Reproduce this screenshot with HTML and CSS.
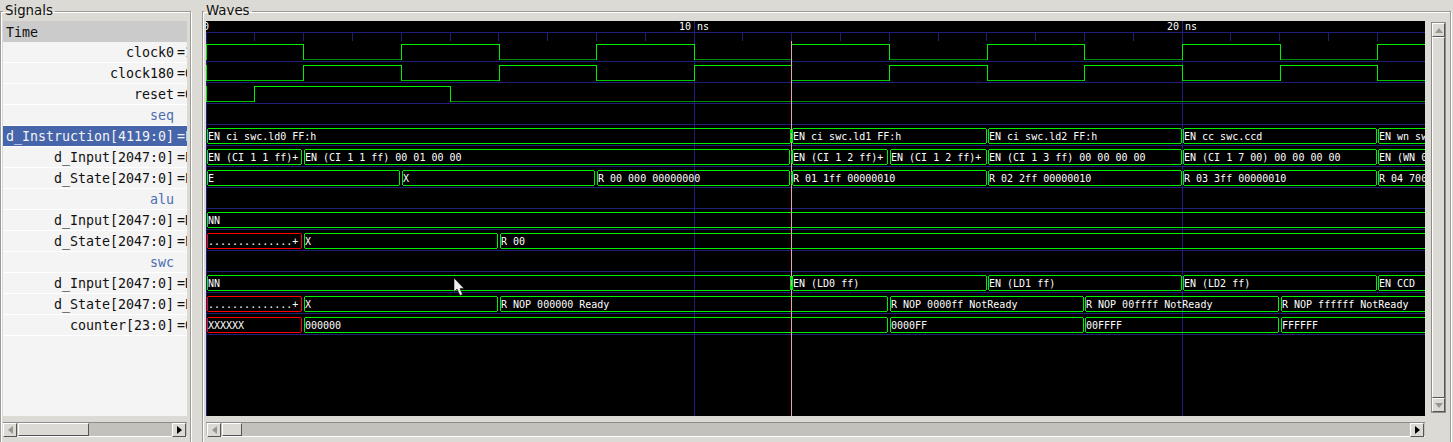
FILE: index.html
```html
<!DOCTYPE html>
<html lang="en">
<head>
    <meta charset="UTF-8">
    <title>GTKWave</title>
    <link rel="stylesheet" href="styles.css">
</head>
<body>

<fieldset class="frame signals">
    <legend>Signals</legend>
    <div class="list">
        <div class="time-row">Time</div>
        <div class="row"><span class="name">clock0</span><span class="eq">=</span><span class="val">1</span></div>
        <div class="row"><span class="name">clock180</span><span class="eq">=</span><span class="val">0</span></div>
        <div class="row"><span class="name">reset</span><span class="eq">=</span><span class="val">0</span></div>
        <div class="row group"><span class="name">seq</span></div>
        <div class="row selected"><span class="name">d_Instruction[4119:0]</span><span class="eq">=</span><span class="val">E</span></div>
        <div class="row"><span class="name">d_Input[2047:0]</span><span class="eq">=</span><span class="val">E</span></div>
        <div class="row"><span class="name">d_State[2047:0]</span><span class="eq">=</span><span class="val">E</span></div>
        <div class="row group"><span class="name">alu</span></div>
        <div class="row"><span class="name">d_Input[2047:0]</span><span class="eq">=</span><span class="val">N</span></div>
        <div class="row"><span class="name">d_State[2047:0]</span><span class="eq">=</span><span class="val">E</span></div>
        <div class="row group"><span class="name">swc</span></div>
        <div class="row"><span class="name">d_Input[2047:0]</span><span class="eq">=</span><span class="val">N</span></div>
        <div class="row"><span class="name">d_State[2047:0]</span><span class="eq">=</span><span class="val">E</span></div>
        <div class="row"><span class="name">counter[23:0]</span><span class="eq">=</span><span class="val">0</span></div>
    </div>
    <div class="hscroll">
        <div class="sb-btn"><i class="arrow left off"></i></div>
        <div class="sb-thumb sig-thumb"></div>
        <div class="sb-track"></div>
        <div class="sb-btn"><i class="arrow right"></i></div>
    </div>
</fieldset>

<fieldset class="frame waves">
    <legend>Waves</legend>
    <div class="waves-grid">
        <svg class="wave-view" viewBox="206 21 1219 395" width="1219" height="395">
            <!-- row lines and time ticks -->
            <path class="grid" d="M206 32.5H1425M206 61.5H1425M206 82.5H1425M206 103.5H1425M206 124.5H1425M206 145.5H1425M206 166.5H1425M206 187.5H1425M206 208.5H1425M206 229.5H1425M206 250.5H1425M206 271.5H1425M206 292.5H1425M206 313.5H1425M206 334.5H1425"/>
            <path class="grid" d="M254.5 32V41M303.5 32V41M352.5 32V41M401.5 32V41M450.5 32V41M498.5 32V41M547.5 32V41M596.5 32V41M645.5 32V41M742.5 32V41M791.5 32V41M840.5 32V41M889.5 32V41M938.5 32V41M986.5 32V41M1035.5 32V41M1084.5 32V41M1133.5 32V41M1230.5 32V41M1279.5 32V41M1328.5 32V41M1377.5 32V41"/>
            <path class="grid" d="M206.5 32V416M694.5 21V416M1182.5 21V416"/>
            <text class="label" x="203" y="30">0</text>
            <text class="label" x="679" y="30">10</text>
            <text class="label" x="697" y="30">ns</text>
            <text class="label" x="1167" y="30">20</text>
            <text class="label" x="1185" y="30">ns</text>

            <!-- clock0 -->
            <path class="low" d="M303 59.5H401M499 59.5H596M694 59.5H791M889 59.5H987M1084 59.5H1182M1280 59.5H1377"/>
            <path class="high" d="M206.5 60V44.5H303.5V60M401.5 60V44.5H499.5V60M596.5 60V44.5H694.5V60M791.5 60V44.5H889.5V60M987.5 60V44.5H1084.5V60M1182.5 60V44.5H1280.5V60M1377.5 60V44.5H1425"/>
            <!-- clock180 -->
            <path class="low-lit" d="M206 80.5H303M401 80.5H499M596 80.5H694M791 80.5H889M987 80.5H1084M1182 80.5H1280M1377 80.5H1425"/>
            <path class="high" d="M206.5 65V81M303.5 81V65.5H401.5V81M499.5 81V65.5H596.5V81M694.5 81V65.5H791.5V81M889.5 81V65.5H987.5V81M1084.5 81V65.5H1182.5V81M1280.5 81V65.5H1377.5V81"/>
            <!-- reset -->
            <path class="low-lit" d="M206 101.5H254"/>
            <path class="low" d="M450 101.5H1425"/>
            <path class="high" d="M206.5 86V102M254.5 102V86.5H450.5V102"/>

            <!-- d_Instruction -->
            <rect class="bus" x="207.5" y="128.5" width="583" height="15" rx="2"/>
            <rect class="bus" x="792.5" y="128.5" width="194" height="15" rx="2"/>
            <rect class="bus" x="988.5" y="128.5" width="193" height="15" rx="2"/>
            <rect class="bus" x="1183.5" y="128.5" width="193" height="15" rx="2"/>
            <rect class="bus" x="1378.5" y="128.5" width="60" height="15" rx="2"/>
            <text class="label" x="208" y="140">EN ci swc.ld0 FF:h</text>
            <text class="label" x="793" y="140">EN ci swc.ld1 FF:h</text>
            <text class="label" x="989" y="140">EN ci swc.ld2 FF:h</text>
            <text class="label" x="1184" y="140">EN cc swc.ccd</text>
            <text class="label" x="1379" y="140">EN wn swc.wn</text>

            <!-- d_Input -->
            <rect class="bus" x="207.5" y="149.5" width="94" height="15" rx="2"/>
            <rect class="bus" x="304.5" y="149.5" width="485" height="15" rx="2"/>
            <rect class="bus" x="792.5" y="149.5" width="95" height="15" rx="2"/>
            <rect class="bus" x="890.5" y="149.5" width="96" height="15" rx="2"/>
            <rect class="bus" x="988.5" y="149.5" width="193" height="15" rx="2"/>
            <rect class="bus" x="1183.5" y="149.5" width="193" height="15" rx="2"/>
            <rect class="bus" x="1378.5" y="149.5" width="60" height="15" rx="2"/>
            <text class="label" x="208" y="161">EN (CI 1 1 ff)+</text>
            <text class="label" x="305" y="161">EN (CI 1 1 ff) 00 01 00 00</text>
            <text class="label" x="793" y="161">EN (CI 1 2 ff)+</text>
            <text class="label" x="891" y="161">EN (CI 1 2 ff)+</text>
            <text class="label" x="989" y="161">EN (CI 1 3 ff) 00 00 00 00</text>
            <text class="label" x="1184" y="161">EN (CI 1 7 00) 00 00 00 00</text>
            <text class="label" x="1379" y="161">EN (WN 0</text>

            <!-- d_State -->
            <rect class="bus" x="207.5" y="170.5" width="192" height="15" rx="2"/>
            <rect class="bus" x="402.5" y="170.5" width="192" height="15" rx="2"/>
            <rect class="bus" x="597.5" y="170.5" width="192" height="15" rx="2"/>
            <rect class="bus" x="792.5" y="170.5" width="194" height="15" rx="2"/>
            <rect class="bus" x="988.5" y="170.5" width="193" height="15" rx="2"/>
            <rect class="bus" x="1183.5" y="170.5" width="193" height="15" rx="2"/>
            <rect class="bus" x="1378.5" y="170.5" width="60" height="15" rx="2"/>
            <text class="label" x="208" y="182">E</text>
            <text class="label" x="403" y="182">X</text>
            <text class="label" x="598" y="182">R 00 000 00000000</text>
            <text class="label" x="793" y="182">R 01 1ff 00000010</text>
            <text class="label" x="989" y="182">R 02 2ff 00000010</text>
            <text class="label" x="1184" y="182">R 03 3ff 00000010</text>
            <text class="label" x="1379" y="182">R 04 700</text>

            <!-- alu -->
            <rect class="bus" x="207.5" y="212.5" width="1230" height="15" rx="2"/>
            <text class="label" x="208" y="224">NN</text>
            <rect class="bus bad" x="207.5" y="233.5" width="94" height="15" rx="2"/>
            <rect class="bus" x="304.5" y="233.5" width="193" height="15" rx="2"/>
            <rect class="bus" x="500.5" y="233.5" width="940" height="15" rx="2"/>
            <text class="label" x="208" y="245">..............+</text>
            <text class="label" x="305" y="245">X</text>
            <text class="label" x="501" y="245">R 00</text>

            <!-- swc -->
            <rect class="bus" x="207.5" y="275.5" width="583" height="15" rx="2"/>
            <rect class="bus" x="792.5" y="275.5" width="194" height="15" rx="2"/>
            <rect class="bus" x="988.5" y="275.5" width="193" height="15" rx="2"/>
            <rect class="bus" x="1183.5" y="275.5" width="193" height="15" rx="2"/>
            <rect class="bus" x="1378.5" y="275.5" width="60" height="15" rx="2"/>
            <text class="label" x="208" y="287">NN</text>
            <text class="label" x="793" y="287">EN (LD0 ff)</text>
            <text class="label" x="989" y="287">EN (LD1 ff)</text>
            <text class="label" x="1184" y="287">EN (LD2 ff)</text>
            <text class="label" x="1379" y="287">EN CCD</text>

            <rect class="bus bad" x="207.5" y="296.5" width="94" height="15" rx="2"/>
            <rect class="bus" x="304.5" y="296.5" width="193" height="15" rx="2"/>
            <rect class="bus" x="500.5" y="296.5" width="387" height="15" rx="2"/>
            <rect class="bus" x="890.5" y="296.5" width="193" height="15" rx="2"/>
            <rect class="bus" x="1085.5" y="296.5" width="193" height="15" rx="2"/>
            <rect class="bus" x="1281.5" y="296.5" width="160" height="15" rx="2"/>
            <text class="label" x="208" y="308">..............+</text>
            <text class="label" x="305" y="308">X</text>
            <text class="label" x="501" y="308">R NOP 000000 Ready</text>
            <text class="label" x="891" y="308">R NOP 0000ff NotReady</text>
            <text class="label" x="1086" y="308">R NOP 00ffff NotReady</text>
            <text class="label" x="1282" y="308">R NOP ffffff NotReady</text>

            <!-- counter -->
            <rect class="bus bad" x="207.5" y="317.5" width="94" height="15" rx="2"/>
            <rect class="bus" x="304.5" y="317.5" width="583" height="15" rx="2"/>
            <rect class="bus" x="890.5" y="317.5" width="193" height="15" rx="2"/>
            <rect class="bus" x="1085.5" y="317.5" width="193" height="15" rx="2"/>
            <rect class="bus" x="1281.5" y="317.5" width="160" height="15" rx="2"/>
            <text class="label" x="208" y="329">XXXXXX</text>
            <text class="label" x="305" y="329">000000</text>
            <text class="label" x="891" y="329">0000FF</text>
            <text class="label" x="1086" y="329">00FFFF</text>
            <text class="label" x="1282" y="329">FFFFFF</text>

            <!-- marker, bus edges crossing it, mouse pointer -->
            <path class="marker" d="M791.5 41V416"/>
            <path class="high" d="M791.5 130V133M791.5 139V142M791.5 151V154M791.5 160V163M791.5 172V175M791.5 181V184M791.5 277V280M791.5 286V289"/>
            <path class="pointer" d="M454 278V292L457 289L460 295.500L462.500 294.500L460 288.500H464Z"/>
        </svg>
        <div class="vscroll">
            <div class="sb-btn"><i class="arrow up off"></i></div>
            <div class="sb-thumb"></div>
            <div class="sb-btn"><i class="arrow down off"></i></div>
        </div>
        <div class="hscroll">
            <div class="sb-btn"><i class="arrow left off"></i></div>
            <div class="sb-thumb wave-thumb"></div>
            <div class="sb-track"></div>
            <div class="sb-btn"><i class="arrow right"></i></div>
        </div>
    </div>
</fieldset>

</body>
</html>
```

FILE: styles.css
```css
html, body {
    height: 442px;
    overflow: hidden;
}
body {
    margin: 0;
    display: flex;
    align-items: flex-start;
    background-color: #dcdad5;
    color: #101010;
    font-family: "DejaVu Sans Mono", monospace;
    font-size: 13.3px;
}

/* frames, the window cuts off their bottom edge */
.frame {
    box-sizing: border-box;
    height: 439px;
    margin: 3px 0 0;
    border: 1px solid #9c9a96;
    border-bottom: 0;
    box-shadow: inset 1px 1px 0 #fff, 1px 1px 0 #fff;
    min-width: 0;
}
.frame legend {
    padding: 0 2px;
    height: 16px;
    line-height: 15px;
    font-family: "DejaVu Sans", sans-serif;
    font-size: 13.33px;
}
.signals {
    width: 191px;
    padding: 2px 3px 0 2px;
}
.waves {
    width: 1249px;
    margin-left: 11px;
    padding: 2px 0 0 3px;
}
.waves legend {
    margin-left: -2px;
}

/* signal list */
.list {
    width: 184px;
    height: 395px;
    background-color: #f4f4f4;
}
.time-row {
    height: 21px;
    line-height: 24px;
    padding-left: 3px;
    background-color: #cbcbcb;
}
.row {
    display: flex;
    box-sizing: border-box;
    height: 21px;
    line-height: 22px;
    border-bottom: 1px solid #fff;
    overflow: hidden;
}
.name {
    flex: none;
    width: 171px;
    text-align: right;
    white-space: nowrap;
}
.eq {
    flex: none;
    width: 8px;
    margin-left: 3px;
}
.val {
    flex: none;
    width: 2px;
    overflow: hidden;
}
.group .name {
    color: #4b6eaf;
}
.selected {
    background-color: #4665aa;
    color: #f4f4f4;
}

/* waves */
.waves-grid {
    display: grid;
    grid-template-columns: 1219px 15px;
    grid-template-rows: 395px 15px;
    column-gap: 6px;
    row-gap: 6px;
}
.wave-view {
    display: block;
    background-color: #000;
}
.grid {
    fill: none;
    stroke: #1f1f7a;
    shape-rendering: crispEdges;
}
.high, .low, .low-lit, .marker {
    fill: none;
    shape-rendering: crispEdges;
}
.high {
    stroke: #00ee00;
}
.low {
    stroke: #008c00;
}
.low-lit {
    stroke: #00c800;
}
.marker {
    stroke: #e8a4a8;
}
.bus {
    fill: none;
    stroke: #00ee00;
    shape-rendering: crispEdges;
}
.bad {
    stroke: #ff0000;
}
.label {
    fill: #fff;
    font-family: "DejaVu Sans Mono", monospace;
    font-size: 10px;
}
.pointer {
    fill: #eee;
    stroke: #000;
    stroke-width: 0.5;
}

/* scrollbars */
.hscroll {
    display: flex;
    box-sizing: border-box;
    height: 15px;
    padding: 0 1px;
    background-color: #c3c1bc;
    border-top: 1px solid #8e8c88;
    border-bottom: 1px solid #fff;
}
.signals .hscroll {
    width: 184px;
    margin-top: 6px;
    padding-left: 0;
}
.sb-track {
    flex: 1;
}
.sb-btn {
    flex: none;
    box-sizing: border-box;
    display: flex;
    align-items: center;
    justify-content: center;
    width: 14px;
    height: 14px;
    background-color: #dcdad5;
    border: 1px solid;
    border-color: #fff #555 #555 #fff;
}
.sb-thumb {
    flex: none;
    box-sizing: border-box;
    background-color: #dcdad5;
    border: 1px solid;
    border-color: #fff #555 #555 #fff;
}
.hscroll .sb-thumb {
    margin-left: 1px;
}
.sig-thumb {
    width: 71px;
}
.wave-thumb {
    width: 20px;
}
.vscroll {
    display: flex;
    flex-direction: column;
    box-sizing: border-box;
    width: 15px;
    height: 391px;
    margin-top: 1px;
    background-color: #c3c1bc;
    border: 1px solid #8e8c88;
}
.vscroll .sb-btn {
    width: 100%;
}
.vscroll .sb-thumb {
    flex: 1;
}
.arrow {
    display: block;
    width: 0;
    height: 0;
    border-style: solid;
    border-color: transparent;
}
.arrow.left {
    border-width: 4px 5px 4px 0;
    border-right-color: #000;
}
.arrow.right {
    border-width: 4px 0 4px 5px;
    border-left-color: #000;
}
.arrow.up {
    border-width: 0 4px 5px;
    border-bottom-color: #000;
}
.arrow.down {
    border-width: 5px 4px 0;
    border-top-color: #000;
}
.arrow.left.off {
    border-right-color: #98968f;
}
.arrow.up.off {
    border-bottom-color: #98968f;
}
.arrow.down.off {
    border-top-color: #98968f;
}
```
